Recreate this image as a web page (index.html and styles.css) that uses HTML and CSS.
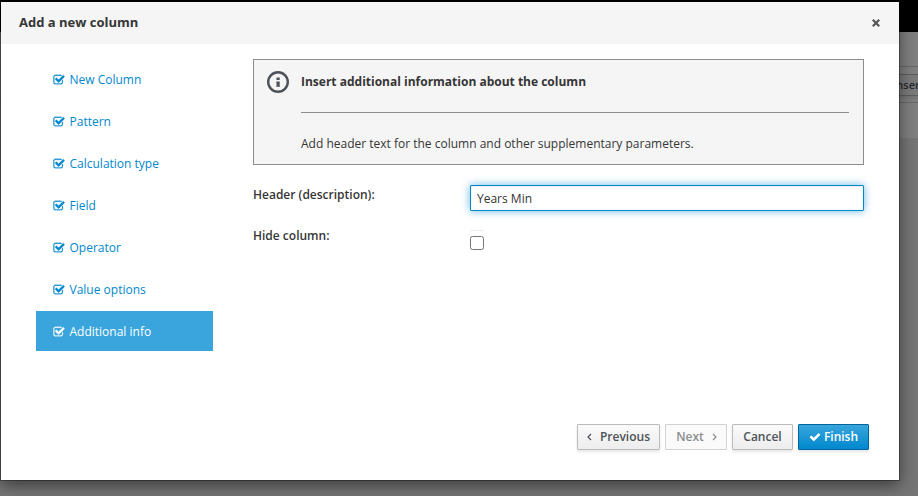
FILE: index.html
```html
<!DOCTYPE html>
<html lang="en">
<head>
<meta charset="utf-8">
<title>Add a new column</title>
<link rel="stylesheet" href="styles.css">
</head>
<body>
<svg class="defs" width="0" height="0">
  <symbol id="check-square" viewBox="0 0 1792 1792"><path d="M1472 930v318q0 119-84.5 203.5t-203.5 84.5h-832q-119 0-203.5-84.5t-84.5-203.5v-832q0-119 84.5-203.5t203.5-84.5h832q63 0 117 25 15 7 18 23 3 17-9 29l-49 49q-10 10-23 10-3 0-9-2-23-6-45-6h-832q-66 0-113 47t-47 113v832q0 66 47 113t113 47h832q66 0 113-47t47-113v-254q0-13 9-22l64-64q10-10 23-10 6 0 12 3 20 8 20 29zm231-489l-814 814q-24 24-57 24t-57-24l-430-430q-24-24-24-57t24-57l110-110q24-24 57-24t57 24l263 263 647-647q24-24 57-24t57 24l110 110q24 24 24 57t-24 57z"/></symbol>
</svg>
<div class="page">
  <div class="masthead"></div>
  <div class="tabs"></div>
  <div class="toolbar"><span class="insert">Insert</span></div>
  <div class="below"></div>
</div>
<div class="modal">
  <header class="modal-header">
    <h1>Add a new column</h1>
    <svg class="close" viewBox="0 0 8 8"><path d="M.8 .8l6.4 6.4M7.2 .8l-6.4 6.4"/></svg>
  </header>
  <div class="modal-body">
    <ul class="steps">
      <li><svg><use href="#check-square"/></svg>New Column</li>
      <li><svg><use href="#check-square"/></svg>Pattern</li>
      <li><svg><use href="#check-square"/></svg>Calculation type</li>
      <li><svg><use href="#check-square"/></svg>Field</li>
      <li><svg><use href="#check-square"/></svg>Operator</li>
      <li><svg><use href="#check-square"/></svg>Value options</li>
      <li class="active"><svg><use href="#check-square"/></svg>Additional info</li>
    </ul>
    <main class="content">
      <section class="info">
        <svg class="info-icon" viewBox="0 0 22 22"><circle cx="11" cy="11" r="9.8"/><path d="M9.5 6.4h3.2v2.7H9.5zM9.2 10.5h3.5v4.4h.4v.9H9.2v-.9h.3v-3.5h-.3z"/></svg>
        <div class="info-text">
          <h2>Insert additional information about the column</h2>
          <p>Add header text for the column and other supplementary parameters.</p>
        </div>
      </section>
      <div class="field"><label for="header">Header (description):</label><input id="header" class="text" type="text" value="Years Min"></div>
      <div class="field"><label for="hide">Hide column:</label><span class="check"><input id="hide" type="checkbox"></span></div>
    </main>
  </div>
  <footer class="modal-footer">
    <button class="btn previous"><svg class="chev" viewBox="0 0 5 8"><path d="M4 1L1 4l3 3"/></svg>Previous</button>
    <button class="btn next" disabled>Next<svg class="chev" viewBox="0 0 5 8"><path d="M1 1l3 3-3 3"/></svg></button>
    <button class="btn cancel">Cancel</button>
    <button class="btn finish"><svg class="tick" viewBox="0 0 1792 1792"><path d="M1671 566q0 40-28 68l-724 724-136 136q-28 28-68 28t-68-28l-136-136-362-362q-28-28-28-68t28-68l136-136q28-28 68-28t68 28l294 295 656-657q28-28 68-28t68 28l136 136q28 28 28 68z"/></svg>Finish</button>
  </footer>
</div>
</body>
</html>
```
FILE: styles.css
```css
* { box-sizing: border-box; }
body {
  margin: 0;
  height: 496px;
  overflow: hidden;
  position: relative;
  font: 12px/20px "Open Sans", sans-serif;
  color: #363636;
}
.defs { position: absolute; }
h1, h2, p, ul { margin: 0; padding: 0; }
svg { flex: none; }

/* dimmed page behind the dialog */
.page { height: 496px; display: flex; flex-direction: column; background: #7f7f7f; }
.masthead { height: 32px; background: #000; }
.tabs { height: 35px; border-bottom: 1px solid #686868; }
.toolbar {
  height: 36px;
  border-bottom: 1px solid #686868;
  display: flex;
  justify-content: flex-end;
  align-items: flex-start;
  padding-top: 7px;
}
.insert {
  width: 40px;
  height: 22px;
  padding-left: 15px;
  line-height: 20px;
  font-size: 11px;
  font-weight: 600;
  color: #26292d;
  background: #7a7a7a;
  border: solid #5d5d5d;
  border-width: 1px 0;
  box-shadow: 0 2px 3px rgba(0, 0, 0, .1);
}
.below { margin-top: 35px; flex: 1; background: #757575; }

.modal {
  position: absolute;
  left: 1px;
  top: 2px;
  width: 898px;
  height: 478px;
  display: flex;
  flex-direction: column;
  background: #fff;
  box-shadow: 0 0 0 1px rgba(0, 0, 0, .3), 0 5px 15px rgba(0, 0, 0, .5);
}
.modal-header {
  height: 42px;
  padding: 0 19px 2px 18px;
  display: flex;
  align-items: center;
  justify-content: space-between;
  background: #f5f5f5;
}
h1 { font-size: 13px; line-height: 20px; font-weight: 700; }
.close { width: 8px; height: 8px; margin-top: 1px; fill: none; stroke: #555; stroke-width: 2.2; overflow: visible; }
.modal-body { flex: 1; display: flex; padding: 15px 35px 0; gap: 40px; }
.steps { width: 177px; list-style: none; }
.steps li {
  height: 40px;
  margin-bottom: 2px;
  padding: 2px 0 0 16.5px;
  display: flex;
  align-items: center;
  color: #0088ce;
}
.steps li svg {
  width: 12px;
  height: 12px;
  margin-right: 5px;
  fill: currentColor;
  stroke: currentColor;
  stroke-width: 35;
}
.steps .active { background: #39a5dc; color: #fff; }
.content { width: 611px; }
.info {
  height: 106px;
  display: flex;
  padding: 11px 14px 0 13px;
  gap: 12px;
  margin-bottom: 20px;
  background: #f5f5f5;
  border: 1px solid #8b8d8f;
}
.info-icon { width: 22px; height: 22px; fill: #4d5258; }
.info-icon circle { fill: none; stroke: #4d5258; stroke-width: 2.4; }
.info-text { flex: 1; }
h2 {
  font-size: 12px;
  line-height: 20px;
  font-weight: 700;
  padding: 1px 0 20px;
  border-bottom: 1px solid #8b8d8f;
}
.info p { padding-top: 21px; }
.field { display: flex; height: 41px; }
label { width: 217px; font-weight: 600; }
.text {
  width: 394px;
  height: 26px;
  padding: 2px 6px;
  font: inherit;
  color: #363636;
  border: 1px solid #0088ce;
  border-radius: 1px;
  outline: 0;
  box-shadow: inset 0 1px 1px rgba(3, 3, 3, .075), 0 0 8px rgba(0, 136, 206, .6);
}
.check { width: 14px; height: 24px; margin-top: 4px; padding-top: 5px; border-top: 1px solid #eee; }
.check input { display: block; width: 14px; height: 14px; margin: 0; }

.modal-footer { display: flex; justify-content: flex-end; gap: 5px; height: 56px; padding-right: 30px; }
.btn {
  height: 26px;
  display: flex;
  align-items: center;
  justify-content: center;
  padding: 0;
  font: 600 12px/20px "Open Sans", sans-serif;
  color: #4d5258;
  border: 1px solid #bbb;
  border-radius: 1px;
  background: linear-gradient(#fafafa, #ededed);
  box-shadow: 0 2px 3px rgba(3, 3, 3, .1);
}
.previous { width: 83px; gap: 8px; }
.next { width: 62px; gap: 8px; padding-left: 1px; color: #8b8d8f; background: #fafafa; border-color: #d1d1d1; box-shadow: none; }
.cancel { width: 61px; }
.finish { width: 71px; color: #fff; border-color: #00659c; background: linear-gradient(#39a5dc, #0088ce); gap: 3px; }
.chev { width: 5px; height: 8px; fill: none; stroke: currentColor; stroke-width: 1.2; }
.tick { width: 12px; height: 12px; fill: currentColor; }
```
